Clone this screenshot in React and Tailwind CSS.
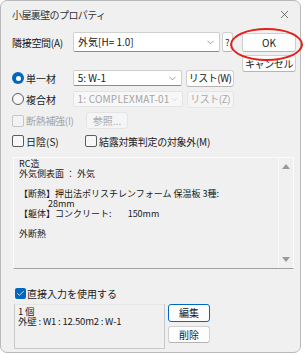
import React from 'react';
import { ChevronDown, X, Check } from 'lucide-react';

const font = { fontFamily: '"Noto Sans CJK JP", "Noto Sans", sans-serif' };

function Combo({ children, disabled, className }) {
  return (
    <div
      className={`flex items-center justify-between pl-[4px] pr-[3px] rounded-[2px] border ${
        disabled ? 'border-[#e3e3e3] bg-[#f7f7f7] text-[#a5a5a5]' : 'border-[#cfcfcf] border-b-[#8a8a8a] bg-white text-[#1a1a1a]'
      } ${className}`}
    >
      <span className="whitespace-nowrap leading-none">{children}</span>
      <ChevronDown size={11} strokeWidth={1.3} className={disabled ? 'text-[#c0c0c0]' : 'text-[#606060]'} />
    </div>
  );
}

function Btn({ children, disabled, className }) {
  return (
    <div
      className={`flex items-center justify-center rounded-[3px] border leading-none whitespace-nowrap ${
        disabled ? 'border-[#e5e5e5] bg-[#f5f5f5] text-[#a8a8a8]' : 'border-[#d0d0d0] border-b-[#b5b5b5] bg-[#fdfdfd] text-[#1a1a1a]'
      } ${className}`}
    >
      {children}
    </div>
  );
}

function Box({ checked, disabled }) {
  if (checked) {
    return (
      <div className="w-[11px] h-[11px] rounded-[2px] bg-[#0067c0] flex items-center justify-center shrink-0">
        <Check size={9} strokeWidth={2} className="text-white" />
      </div>
    );
  }
  return (
    <div
      className={`w-[12px] h-[12px] rounded-[2px] border shrink-0 ${
        disabled ? 'border-[#c6c6c6] bg-[#f3f3f3]' : 'border-[#5c5c5c] bg-[#f7f7f7]'
      }`}
    />
  );
}

function Radio({ checked }) {
  if (checked) {
    return (
      <div className="w-[12px] h-[12px] rounded-full bg-[#0067c0] flex items-center justify-center shrink-0">
        <div className="w-[5px] h-[5px] rounded-full bg-white" />
      </div>
    );
  }
  return <div className="w-[12px] h-[12px] rounded-full border border-[#5c5c5c] bg-[#f7f7f7] shrink-0" />;
}

export default function App() {
  return (
    <div className="relative w-[306px] h-[355px] bg-white text-[10px] text-[#1a1a1a]" style={font}>
      <div className="w-[301px] h-[353px] bg-[#f0f0f0] border border-[#b9b9b9] rounded-[7px] flex flex-col">
        {/* title bar */}
        <div className="h-[27px] flex items-center justify-between pl-[11px] pr-[9px] shrink-0">
          <span className="text-[#333] tracking-[-0.6px]">小屋裏壁のプロパティ</span>
          <X size={13} strokeWidth={1.2} className="text-[#333]" />
        </div>

        <div className="pl-[11px] pr-[6px] flex flex-col">
          {/* top section */}
          <div className="flex items-start mt-[4px]">
            <div className="flex flex-col w-[222px]">
              <div className="flex items-center h-[20px]">
                <span className="w-[61px] whitespace-nowrap tracking-[-0.3px]">隣接空間(A)</span>
                <Combo className="w-[147px] h-[20px]">外気[H= 1.0]</Combo>
                <Btn className="w-[11px] h-[20px] ml-[2px] text-[9px]">?</Btn>
              </div>

              <div className="flex items-center h-[16px] mt-[18px]">
                <Radio checked />
                <span className="ml-[2px] w-[47px]">単一材</span>
                <Combo className="w-[110px] h-[16px]">5: W-1</Combo>
                <Btn className="w-[48px] h-[17px] ml-[4px] tracking-[-0.5px]">リスト(W)</Btn>
              </div>

              <div className="flex items-center h-[16px] mt-[5px]">
                <Radio />
                <span className="ml-[2px] w-[47px]">複合材</span>
                <Combo disabled className="w-[110px] h-[16px] tracking-[0.2px]">1: COMPLEXMAT-01</Combo>
                <Btn disabled className="w-[48px] h-[17px] ml-[4px] tracking-[-0.5px]">リスト(Z)</Btn>
              </div>

              <div className="flex items-center h-[17px] mt-[5px]">
                <Box disabled />
                <span className="ml-[2px] w-[60px] text-[#a5a5a5] tracking-[-0.3px]">断熱補強(I)</span>
                <Btn disabled className="w-[42px] h-[17px]">参照...</Btn>
              </div>

              <div className="flex items-center h-[14px] mt-[5px]">
                <Box />
                <span className="ml-[2px] w-[59px]">日陰(S)</span>
                <Box />
                <span className="ml-[2px] whitespace-nowrap tracking-[-0.3px]">結露対策判定の対象外(M)</span>
              </div>
            </div>

            <div className="flex flex-col ml-[8px]">
              <Btn className="w-[54px] h-[19px] mt-[1px]">OK</Btn>
              <Btn className="w-[54px] h-[17px] mt-[3px] tracking-[-0.4px]">キャンセル</Btn>
            </div>
          </div>

          {/* description */}
          <div className="flex w-[281px] h-[112px] mt-[9px] ml-[1px] border border-[#fbfbfb] border-b-[#a0a0a0] bg-[#f0f0f0]">
            <div className="flex-1 pl-[5px] pt-[1px] leading-[10px] text-[9px]">
              <div>RC造</div>
              <div>外気側表面 ： 外気</div>
              <div className="h-[10px]" />
              <div className="whitespace-nowrap">【断熱】押出法ポリスチレンフォーム 保温板 3種:</div>
              <div className="pl-[29px]">28mm</div>
              <div className="whitespace-pre">【躯体】コンクリート:        150mm</div>
              <div className="h-[10px]" />
              <div>外断熱</div>
            </div>
            <div className="w-[15px] border-l border-[#fafafa] flex flex-col items-center justify-between py-[6px]">
              <svg width="8" height="5" viewBox="0 0 8 5"><path d="M4 0L8 5H0z" fill="#9a9a9a" /></svg>
              <svg width="8" height="5" viewBox="0 0 8 5"><path d="M0 0H8L4 5z" fill="#9a9a9a" /></svg>
            </div>
          </div>

          {/* direct input */}
          <div className="flex items-center h-[12px] mt-[18px] ml-[3px]">
            <Box checked />
            <span className="ml-[1px] text-[10px]">直接入力を使用する</span>
          </div>

          <div className="flex items-start mt-[5px] ml-[2px]">
            <div className="w-[151px] h-[45px] border border-[#c8c8c8] border-t-[#e6e6e6] pl-[3px] pt-[1px] leading-[10px] text-[9.5px] tracking-[-0.2px]">
              <div>1 個</div>
              <div className="whitespace-nowrap">外壁 : W1 : 12.50m2 : W-1</div>
            </div>
            <div className="flex flex-col ml-[3px]">
              <Btn className="w-[42px] h-[18px] !border-[#0067c0]">編集</Btn>
              <Btn className="w-[42px] h-[17px] mt-[4px]">削除</Btn>
            </div>
          </div>
        </div>
      </div>

      {/* annotation */}
      <div className="absolute left-[230px] top-[28px] w-[73px] h-[33px] rounded-[50%] border-[2px] border-[#e3211b] pointer-events-none" />
    </div>
  );
}
